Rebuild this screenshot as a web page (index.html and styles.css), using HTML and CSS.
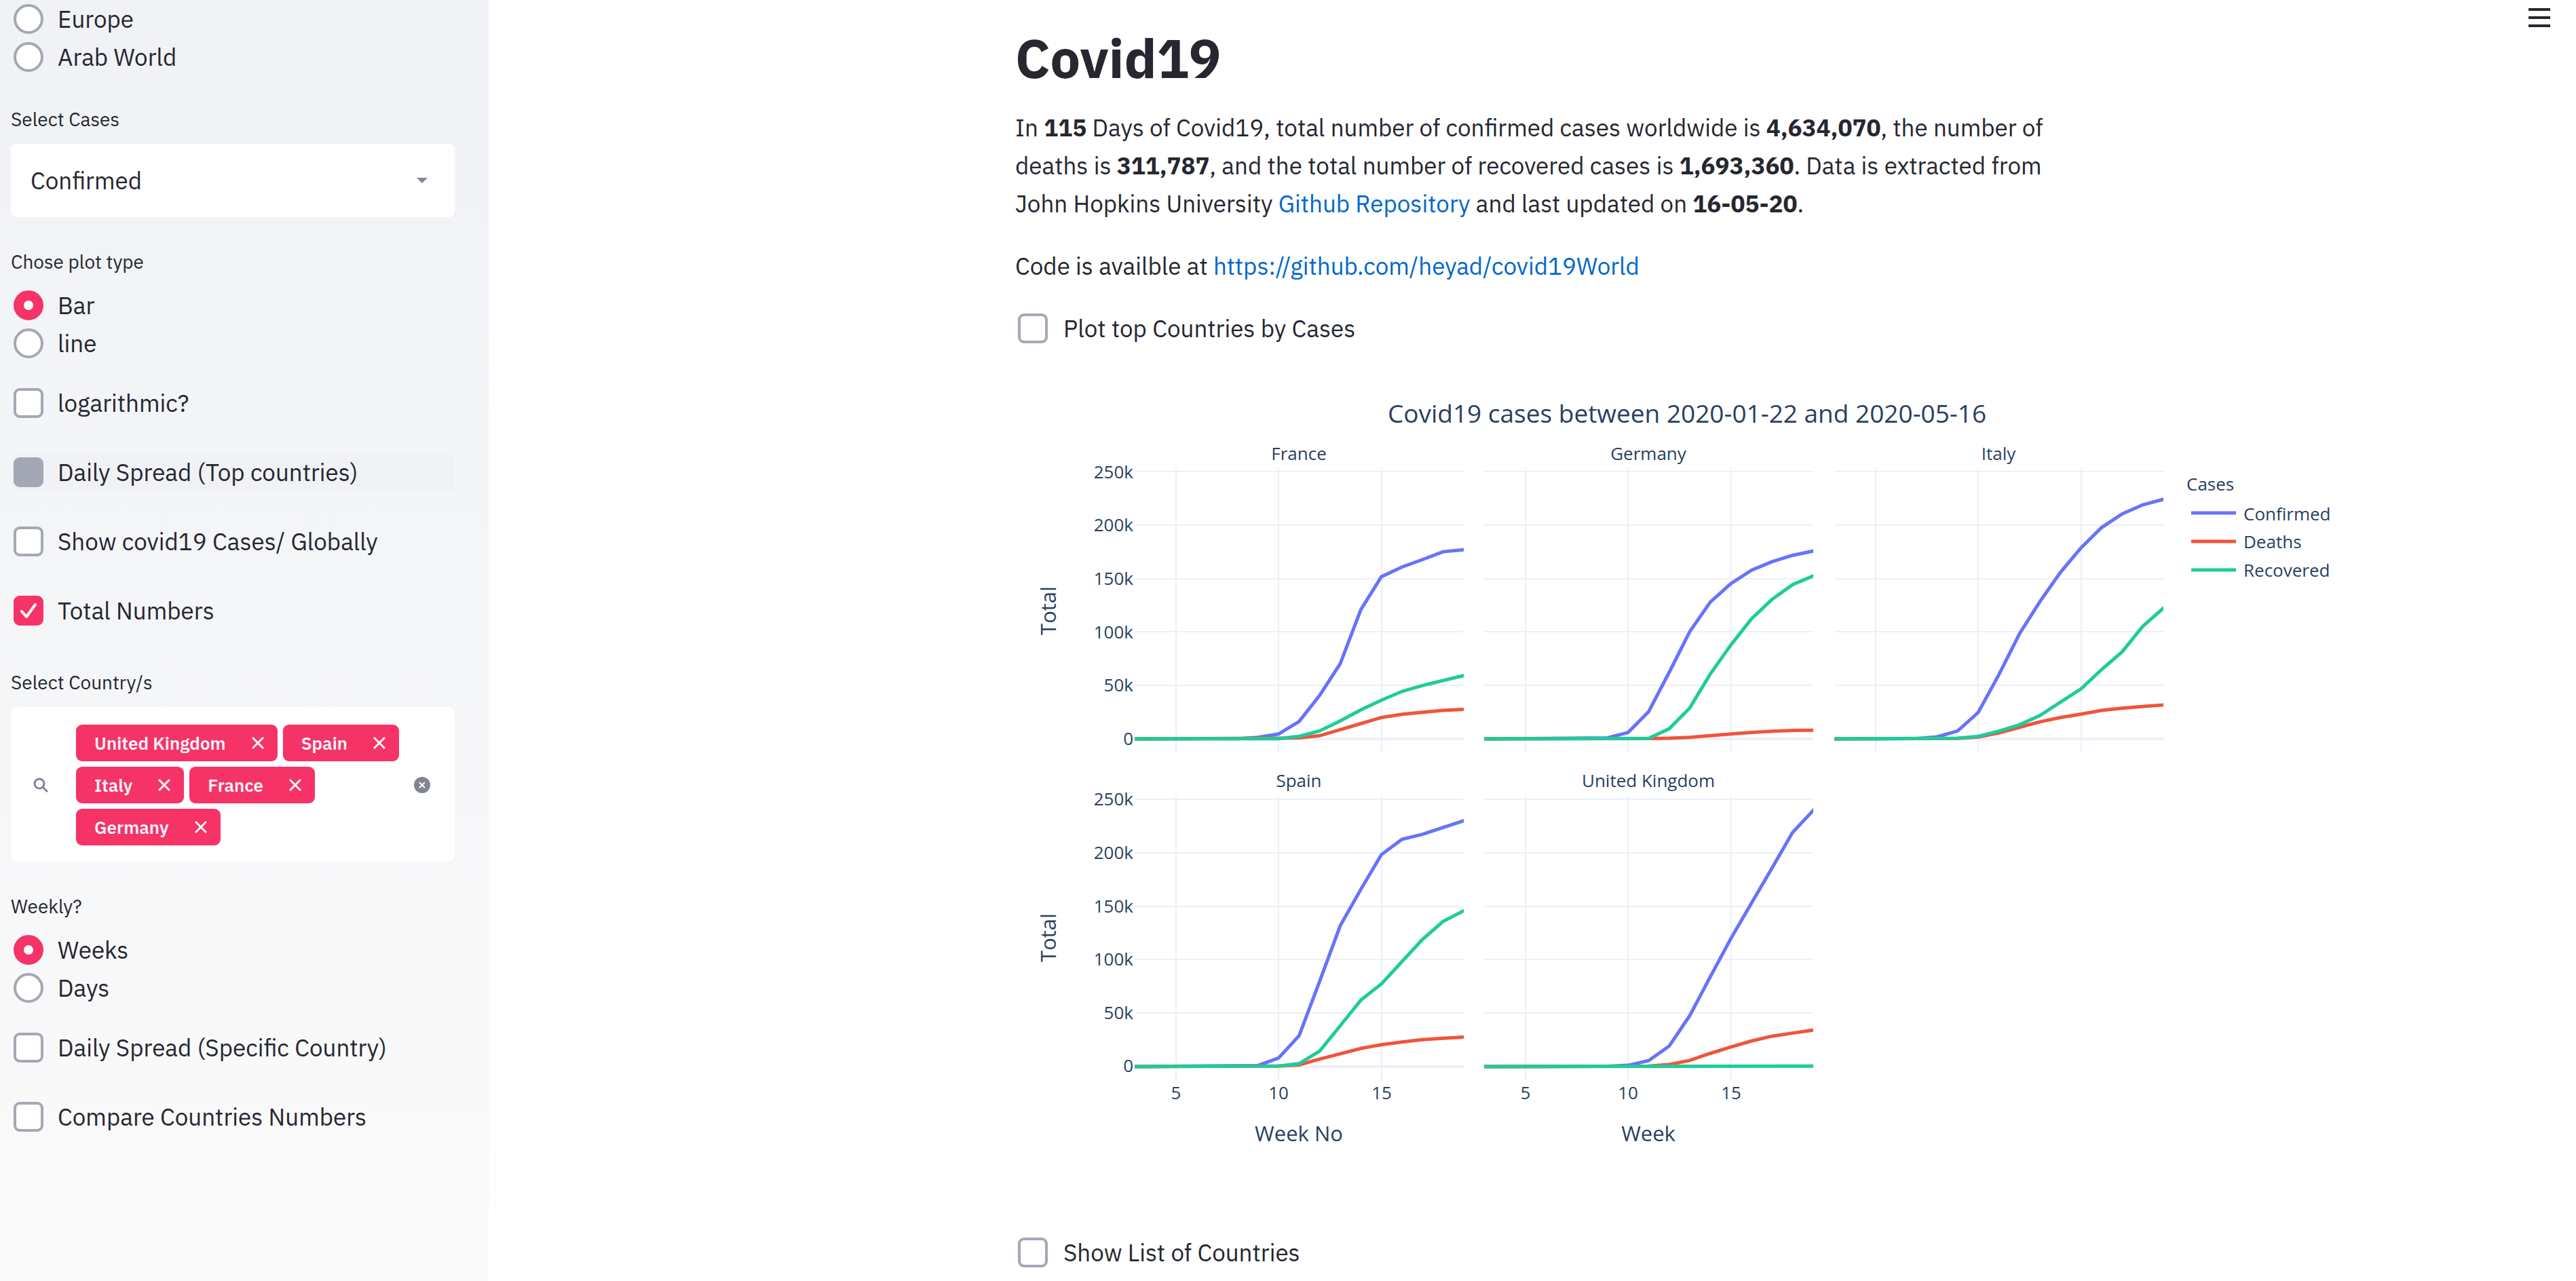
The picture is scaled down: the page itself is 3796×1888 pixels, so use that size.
FILE: index.html
```html
<!DOCTYPE html>
<html lang="en">
<head>
<meta charset="utf-8">
<meta name="viewport" content="width=device-width, initial-scale=1">
<title>Covid19</title>
<link rel="stylesheet" href="styles.css">
</head>
<body>
<div class="app">
  <aside class="sidebar">
    <fieldset class="field field-scrolled" aria-label="Region">
      <label class="option"><input class="radio" type="radio" name="region"><span>Europe</span></label>
      <label class="option"><input class="radio" type="radio" name="region"><span>Arab World</span></label>
    </fieldset>

    <div class="field">
      <label class="field-label" for="cases">Select Cases</label>
      <div class="select-box">
        <select class="select" id="cases">
          <option>Confirmed</option>
          <option>Deaths</option>
          <option>Recovered</option>
        </select>
        <svg class="select-arrow" viewBox="0 0 16 8" aria-hidden="true"><path d="M0 0h16L8 8z"/></svg>
      </div>
    </div>

    <fieldset class="field">
      <legend class="field-label">Chose plot type</legend>
      <label class="option"><input class="radio" type="radio" name="plot" checked><span>Bar</span></label>
      <label class="option"><input class="radio" type="radio" name="plot"><span>line</span></label>
    </fieldset>

    <div class="checks">
      <label class="option"><input class="checkbox" type="checkbox"><span>logarithmic?</span></label>
      <label class="option option-active"><input class="checkbox" type="checkbox"><span>Daily Spread (Top countries)</span></label>
      <label class="option"><input class="checkbox" type="checkbox"><span>Show covid19 Cases/ Globally</span></label>
      <label class="option">
        <span class="tick-box"><input class="checkbox" type="checkbox" checked><svg class="tick" viewBox="0 0 44 44" aria-hidden="true"><path d="M12 23l7 8 13-18"/></svg></span>
        <span>Total Numbers</span>
      </label>
    </div>

    <div class="field">
      <span class="field-label" id="countries-label">Select Country/s</span>
      <div class="multi" role="group" aria-labelledby="countries-label">
        <svg class="multi-search" viewBox="0 0 24 24" aria-hidden="true"><circle cx="10" cy="10" r="7"/><path d="M15 15l7 7"/></svg>
        <ul class="tags">
          <li class="tag">United Kingdom<button class="tag-remove" type="button" aria-label="Remove United Kingdom"><svg viewBox="0 0 18 18"><path d="M1 1l16 16M17 1L1 17"/></svg></button></li>
          <li class="tag">Spain<button class="tag-remove" type="button" aria-label="Remove Spain"><svg viewBox="0 0 18 18"><path d="M1 1l16 16M17 1L1 17"/></svg></button></li>
          <li class="tag">Italy<button class="tag-remove" type="button" aria-label="Remove Italy"><svg viewBox="0 0 18 18"><path d="M1 1l16 16M17 1L1 17"/></svg></button></li>
          <li class="tag">France<button class="tag-remove" type="button" aria-label="Remove France"><svg viewBox="0 0 18 18"><path d="M1 1l16 16M17 1L1 17"/></svg></button></li>
          <li class="tag">Germany<button class="tag-remove" type="button" aria-label="Remove Germany"><svg viewBox="0 0 18 18"><path d="M1 1l16 16M17 1L1 17"/></svg></button></li>
        </ul>
        <button class="multi-clear" type="button" aria-label="Clear all"><svg viewBox="0 0 24 24"><circle cx="12" cy="12" r="12"/><path d="M8 8l8 8M16 8l-8 8"/></svg></button>
      </div>
    </div>

    <fieldset class="field">
      <legend class="field-label">Weekly?</legend>
      <label class="option"><input class="radio" type="radio" name="period" checked><span>Weeks</span></label>
      <label class="option"><input class="radio" type="radio" name="period"><span>Days</span></label>
    </fieldset>

    <div class="checks">
      <label class="option"><input class="checkbox" type="checkbox"><span>Daily Spread (Specific Country)</span></label>
      <label class="option"><input class="checkbox" type="checkbox"><span>Compare Countries Numbers</span></label>
    </div>
  </aside>

  <main class="main">
    <button class="menu" type="button" aria-label="Menu"><span class="menu-bar"></span><span class="menu-bar"></span><span class="menu-bar"></span></button>
    <div class="column">
      <h1 class="title">Covid19</h1>
      <p class="text">In <strong>115</strong> Days of Covid19, total number of confirmed cases worldwide is <strong>4,634,070</strong>, the number of deaths is <strong>311,787</strong>, and the total number of recovered cases is <strong>1,693,360</strong>. Data is extracted from John Hopkins University <a class="link" href="#">Github Repository</a> and last updated on <strong>16-05-20</strong>.</p>
      <p class="text">Code is availble at <a class="link" href="#">https://github.com/heyad/covid19World</a></p>
      <label class="option"><input class="checkbox" type="checkbox"><span>Plot top Countries by Cases</span></label>

      <svg class="chart" width="1980" height="1214" viewBox="0 0 1980 1214" role="img" aria-label="Covid19 cases between 2020-01-22 and 2020-05-16">
        <defs>
          <g id="grid">
            <path class="grid-line" d="M61 0v419M212 0v419M364 0v419M0 5h485M0 84h485M0 163h485M0 241h485M0 320h485"/>
            <path class="zero-line" d="M0 399h485"/>
          </g>
        </defs>

        <text class="chart-title" x="990" y="65">Covid19 cases between 2020-01-22 and 2020-05-16</text>

        <svg x="176" y="132" width="485" height="419">
          <use href="#grid"/>
          <!-- points are week offset, thousands of cases -->
          <g transform="translate(0 399) scale(30.3 -1.573)">
            <polyline class="line confirmed" points="0,0 5,.2 6,1.5 7,4.6 8,16.3 9,40.8 10,70.5 11,121 12,152 13,161 14,168 15,175.4 16.1,177.4"/>
            <polyline class="line deaths" points="0,0 7,.6 8,1 9,3 10,8.7 11,14.3 12,20 13,23 14,25 15,26.7 16.1,27.8"/>
            <polyline class="line recovered" points="0,0 7,.2 8,2.4 9,7.5 10,16.8 11,27.2 12,36.2 13,44.5 14,50 15,54.7 16.1,59.8"/>
          </g>
        </svg>
        <svg x="691" y="132" width="485" height="419">
          <use href="#grid"/>
          <g transform="translate(0 399) scale(30.3 -1.573)">
            <polyline class="line confirmed" points="0,0 6,1 7,6 8,25.5 9,62.3 10,100.5 11,128.2 12,145.5 13,158 14,166 15,172 16.1,176.4"/>
            <polyline class="line deaths" points="0,0 8,.3 9,.6 10,1.5 11,3 12,4.6 13,6 14,7.2 15,7.9 16.1,8.2"/>
            <polyline class="line recovered" points="0,0 8,.5 9,9.5 10,29 11,60.8 12,88 13,112.4 14,130.7 15,144.5 16.1,153.5"/>
          </g>
        </svg>
        <svg x="1207" y="132" width="485" height="419">
          <use href="#grid"/>
          <g transform="translate(0 399) scale(30.3 -1.573)">
            <polyline class="line confirmed" points="0,0 4,.3 5,1.9 6,7.4 7,24.8 8,60 9,98.2 10,128.7 11,156 12,179 13,198 14,210.8 15,219.3 16.1,225"/>
            <polyline class="line deaths" points="0,0 6,.5 7,1.8 8,5.5 9,10.8 10,16 11,20 12,23.2 13,26.7 14,28.8 15,30.3 16.1,32"/>
            <polyline class="line recovered" points="0,0 6,.7 7,2.4 8,7.2 9,13.1 10,21.9 11,34.4 12,46.9 13,65 14,81.6 15,105.4 16.1,124"/>
          </g>
        </svg>
        <svg x="176" y="615" width="485" height="419">
          <use href="#grid"/>
          <g transform="translate(0 399) scale(30.3 -1.573)">
            <polyline class="line confirmed" points="0,0 6,1 7,8 8,29 9,80 10,132 11,166 12,198.6 13,213 14,217.6 15,224 16.1,231"/>
            <polyline class="line deaths" points="0,0 7,.6 8,1.6 9,7.1 10,12 11,17 12,20.5 13,23 14,25.3 15,26.5 16.1,27.7"/>
            <polyline class="line recovered" points="0,0 7,.5 8,2.8 9,14.6 10,38.3 11,62.2 12,77.5 13,98.4 14,119.2 15,136 16.1,147"/>
          </g>
        </svg>
        <svg x="691" y="615" width="485" height="419">
          <use href="#grid"/>
          <g transform="translate(0 399) scale(30.3 -1.573)">
            <polyline class="line confirmed" points="0,0 6,.3 7,1.2 8,5.6 9,19.2 10,47.7 11,84.2 12,120 13,153 14,186 15,219.3 16.1,242"/>
            <polyline class="line deaths" points="0,0 8,.5 9,1.9 10,5.8 11,12.4 12,18.3 13,24 14,28.5 15,31.4 16.1,34.5"/>
            <polyline class="line recovered" points="0,0 16.1,.4"/>
          </g>
        </svg>

        <g class="chart-label">
          <text x="418" y="120">France</text>
          <text x="933" y="120">Germany</text>
          <text x="1449" y="120">Italy</text>
          <text x="418" y="602">Spain</text>
          <text x="933" y="602">United Kingdom</text>
          <text x="237" y="1062">5</text>
          <text x="388" y="1062">10</text>
          <text x="540" y="1062">15</text>
          <text x="752" y="1062">5</text>
          <text x="903" y="1062">10</text>
          <text x="1055" y="1062">15</text>
        </g>
        <g class="chart-label label-end">
          <text x="174" y="147">250k</text>
          <text x="174" y="225">200k</text>
          <text x="174" y="304">150k</text>
          <text x="174" y="383">100k</text>
          <text x="174" y="461">50k</text>
          <text x="174" y="540">0</text>
          <text x="174" y="629">250k</text>
          <text x="174" y="708">200k</text>
          <text x="174" y="787">150k</text>
          <text x="174" y="865">100k</text>
          <text x="174" y="944">50k</text>
          <text x="174" y="1022">0</text>
        </g>
        <g class="axis-title">
          <text x="418" y="1124">Week No</text>
          <text x="933" y="1124">Week</text>
          <text transform="translate(60 342) rotate(-90)">Total</text>
          <text transform="translate(60 824) rotate(-90)">Total</text>
        </g>
        <g class="chart-label label-start">
          <text x="1726" y="165">Cases</text>
          <text x="1810" y="209">Confirmed</text>
          <text x="1810" y="250">Deaths</text>
          <text x="1810" y="292">Recovered</text>
        </g>
        <path class="line confirmed" d="M1733 198h66"/>
        <path class="line deaths" d="M1733 240h66"/>
        <path class="line recovered" d="M1733 282h66"/>
      </svg>

      <label class="option"><input class="checkbox" type="checkbox"><span>Show List of Countries</span></label>
    </div>
  </main>
</div>
</body>
</html>
```
FILE: styles.css
```css
* {
  box-sizing: border-box;
}

body {
  margin: 0;
  background: #fff;
  color: #262730;
  font-family: "IBM Plex Sans", Roboto, sans-serif;
  font-size: 35px;
  line-height: 56px;
}

button {
  padding: 0;
  border: 0;
  background: none;
  cursor: pointer;
}

.app {
  display: flex;
  height: 100vh;
  overflow: hidden;
}

/* Sidebar */

.sidebar {
  flex: none;
  width: 720px;
  padding: 0 50px 0 16px;
  background: linear-gradient(#f0f2f6, #fafafa);
  overflow: hidden;
}

.field {
  min-width: 0;
  margin: 0 0 44px;
  padding: 0;
  border: 0;
}

.field-scrolled {
  margin-bottom: 42px;
}

fieldset.field:not(.field-scrolled) {
  margin-bottom: 32px;
}

.field-label {
  display: block;
  margin-bottom: 14px;
  padding: 0;
  font-size: 28px;
  line-height: 44px;
}

.option {
  display: flex;
  align-items: center;
  gap: 23px;
  padding-left: 4px;
  border-radius: 9px;
}

.sidebar .option {
  gap: 21px;
}

.option-active {
  background: #f0f2f6;
}

.checks {
  display: grid;
  gap: 46px;
  margin-bottom: 56px;
}

.radio,
.checkbox {
  flex: none;
  appearance: none;
  width: 44px;
  height: 44px;
  margin: 0;
  border: 4px solid #a3a8b4;
  background: #fff;
}

.radio {
  border-radius: 50%;
}

.radio:checked {
  border: 15px solid #f63366;
}

.checkbox {
  border-radius: 9px;
}

.checkbox:checked {
  border-color: #f63366;
  background: #f63366;
}

.option-active .checkbox {
  background: #a3a8b4;
}

.tick-box {
  display: grid;
}

.tick-box > * {
  grid-area: 1 / 1;
}

.tick {
  width: 44px;
  height: 44px;
  fill: none;
  stroke: #fff;
  stroke-width: 4;
  stroke-linecap: round;
  stroke-linejoin: round;
  pointer-events: none;
}

.select-box {
  display: grid;
  align-items: center;
}

.select-box > * {
  grid-area: 1 / 1;
}

.select {
  appearance: none;
  width: 100%;
  height: 108px;
  padding: 0 29px;
  border: 0;
  border-radius: 9px;
  background: #fff;
  color: inherit;
  font: inherit;
}

.select-arrow {
  justify-self: end;
  width: 16px;
  height: 8px;
  margin-right: 40px;
  fill: #808495;
  pointer-events: none;
}

.multi {
  display: flex;
  align-items: center;
  padding: 26px 36px 24px 32px;
  border-radius: 9px;
  background: #fff;
}

.multi-search {
  flex: none;
  width: 24px;
  height: 24px;
  fill: none;
  stroke: #808495;
  stroke-width: 3;
}

.tags {
  display: flex;
  flex: 1;
  flex-wrap: wrap;
  gap: 8px;
  margin: 0;
  padding: 0 0 0 40px;
  list-style: none;
}

.tag {
  display: flex;
  align-items: center;
  gap: 38px;
  padding: 0 20px 0 27px;
  border-radius: 9px;
  background: #f63366;
  color: #f0f2f6;
  font-size: 26px;
  font-weight: 600;
  line-height: 54px;
}

.tag-remove {
  display: flex;
}

.tag-remove svg {
  width: 18px;
  height: 18px;
  stroke: #f0f2f6;
  stroke-width: 3;
}

.multi-clear {
  display: flex;
}

.multi-clear svg {
  width: 24px;
  height: 24px;
  fill: #808495;
  stroke: #fff;
  stroke-width: 2;
}

.multi-clear circle {
  stroke: none;
}

/* Main column */

.main {
  position: relative;
  flex: 1;
  min-width: 0;
  padding: 38px 0 0 12px;
}

.menu {
  position: absolute;
  top: 12px;
  right: 38px;
  display: grid;
  gap: 8px;
  width: 32px;
}

.menu-bar {
  height: 4px;
  background: #262730;
}

.column {
  max-width: 1536px;
  margin: 0 auto;
}

.title {
  margin: 0 0 26px;
  font-size: 79px;
  font-weight: 700;
  line-height: 96px;
}

.text {
  margin: 0 0 36px;
}

.link {
  color: #0068c9;
  text-decoration: none;
}

/* Chart */

.chart {
  display: block;
  margin: 46px 0;
  overflow: visible;
  fill: #2a3f5f;
  font-family: "Open Sans", sans-serif;
  text-anchor: middle;
}

.chart-title {
  font-size: 37px;
}

.chart-label {
  font-size: 26px;
}

.label-end {
  text-anchor: end;
}

.label-start {
  text-anchor: start;
}

.axis-title {
  font-size: 31px;
}

.grid-line,
.zero-line {
  fill: none;
  stroke: #ebf0f8;
  stroke-width: 2;
  shape-rendering: crispEdges;
}

.zero-line {
  stroke-width: 4;
}

.line {
  fill: none;
  stroke-width: 5;
  vector-effect: non-scaling-stroke;
}

.confirmed {
  stroke: #6673fa;
}

.deaths {
  stroke: #ef553b;
}

.recovered {
  stroke: #1fcc98;
}
```
